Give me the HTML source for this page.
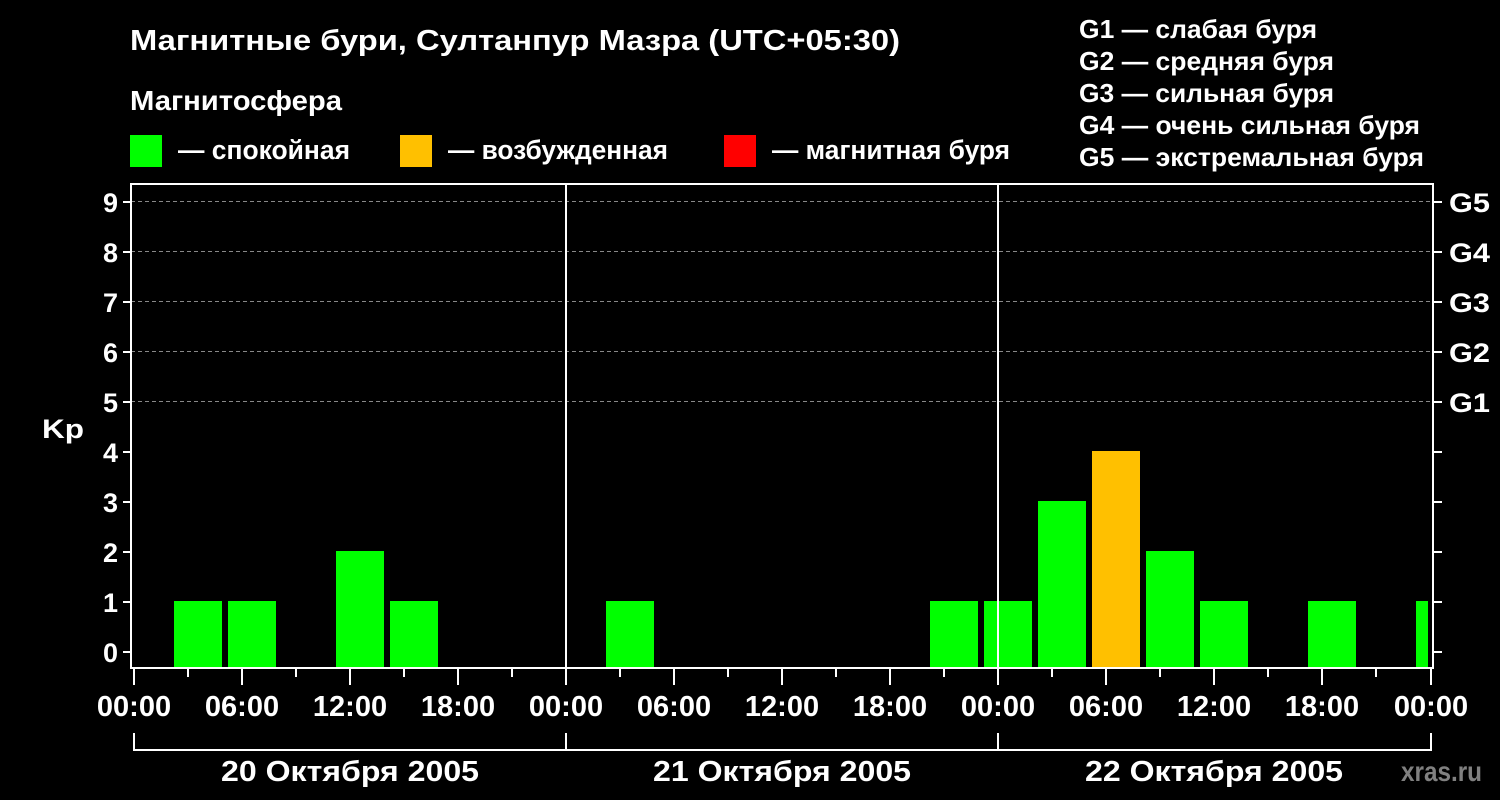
<!DOCTYPE html><html><head><meta charset="utf-8"><style>body{margin:0;background:#000}svg{display:block}text{font-family:"Liberation Sans",sans-serif;font-weight:bold;fill:#fff}</style></head><body>
<svg width="1500" height="800" viewBox="0 0 1500 800">
<rect width="1500" height="800" fill="#000"/>
<text x="130" y="50" font-size="29" textLength="770" lengthAdjust="spacingAndGlyphs">Магнитные бури, Султанпур Мазра (UTC+05:30)</text>
<text x="130" y="110" font-size="28" textLength="212" lengthAdjust="spacingAndGlyphs">Магнитосфера</text>
<rect x="130" y="135" width="32" height="32" fill="#00ff00"/><text x="178" y="159" font-size="27" textLength="172" lengthAdjust="spacingAndGlyphs">— спокойная</text>
<rect x="400" y="135" width="32" height="32" fill="#ffc000"/><text x="448" y="159" font-size="27" textLength="220" lengthAdjust="spacingAndGlyphs">— возбужденная</text>
<rect x="724" y="135" width="32" height="32" fill="#ff0000"/><text x="772" y="159" font-size="27" textLength="238" lengthAdjust="spacingAndGlyphs">— магнитная буря</text>
<g font-size="26"><text x="1079" y="38" textLength="238" lengthAdjust="spacingAndGlyphs">G1 — слабая буря</text><text x="1079" y="70" textLength="255" lengthAdjust="spacingAndGlyphs">G2 — средняя буря</text><text x="1079" y="102" textLength="255" lengthAdjust="spacingAndGlyphs">G3 — сильная буря</text><text x="1079" y="134" textLength="341" lengthAdjust="spacingAndGlyphs">G4 — очень сильная буря</text><text x="1079" y="166" textLength="345" lengthAdjust="spacingAndGlyphs">G5 — экстремальная буря</text></g>
<g stroke="#888" stroke-dasharray="4,3" stroke-width="1"><line x1="131" y1="201.5" x2="1432" y2="201.5"/><line x1="131" y1="251.5" x2="1432" y2="251.5"/><line x1="131" y1="301.5" x2="1432" y2="301.5"/><line x1="131" y1="351.5" x2="1432" y2="351.5"/><line x1="131" y1="401.5" x2="1432" y2="401.5"/></g>
<g fill="#00ff00">
<rect x="174" y="601" width="48" height="67"/><rect x="228" y="601" width="48" height="67"/><rect x="336" y="551" width="48" height="117"/><rect x="390" y="601" width="48" height="67"/>
<rect x="606" y="601" width="48" height="67"/>
<rect x="930" y="601" width="48" height="67"/><rect x="984" y="601" width="48" height="67"/><rect x="1038" y="501" width="48" height="167"/><rect x="1146" y="551" width="48" height="117"/><rect x="1200" y="601" width="48" height="67"/><rect x="1308" y="601" width="48" height="67"/><rect x="1416" y="601" width="12" height="67"/>
</g>
<rect x="1092" y="451" width="48" height="217" fill="#ffc000"/>
<g stroke="#fff" stroke-width="2" fill="none">
<rect x="131" y="184" width="1302" height="484"/>
<line x1="566" y1="184" x2="566" y2="685"/><line x1="998" y1="184" x2="998" y2="685"/>
<line x1="134" y1="668" x2="134" y2="685"/><line x1="1431" y1="668" x2="1431" y2="685"/>
<path d="M134 733V750H1431V733M566 733V750M998 733V750"/>
<path d="M188 668v9M242 668v9M296 668v9M350 668v9M404 668v9M458 668v9M512 668v9M620 668v9M674 668v9M728 668v9M782 668v9M836 668v9M890 668v9M944 668v9M1052 668v9M1106 668v9M1160 668v9M1214 668v9M1268 668v9M1322 668v9M1376 668v9"/>
<path d="M242 677v8M350 677v8M458 677v8M674 677v8M782 677v8M890 677v8M1106 677v8M1214 677v8M1322 677v8"/>
<path d="M123 652h8M123 602h8M123 552h8M123 502h8M123 452h8M123 402h8M123 352h8M123 302h8M123 252h8M123 202h8"/>
<path d="M1433 652h9M1433 602h9M1433 552h9M1433 502h9M1433 452h9M1433 402h9M1433 352h9M1433 302h9M1433 252h9M1433 202h9"/>
</g>
<g font-size="27" text-anchor="end"><text x="118" y="662">0</text><text x="118" y="612">1</text><text x="118" y="562">2</text><text x="118" y="512">3</text><text x="118" y="462">4</text><text x="118" y="412">5</text><text x="118" y="362">6</text><text x="118" y="312">7</text><text x="118" y="262">8</text><text x="118" y="212">9</text></g>
<text x="42" y="438" font-size="27" textLength="42" lengthAdjust="spacingAndGlyphs">Kp</text>
<g font-size="27"><text x="1449" y="412" textLength="41" lengthAdjust="spacingAndGlyphs">G1</text><text x="1449" y="362" textLength="41" lengthAdjust="spacingAndGlyphs">G2</text><text x="1449" y="312" textLength="41" lengthAdjust="spacingAndGlyphs">G3</text><text x="1449" y="262" textLength="41" lengthAdjust="spacingAndGlyphs">G4</text><text x="1449" y="212" textLength="41" lengthAdjust="spacingAndGlyphs">G5</text></g>
<g font-size="29" text-anchor="middle">
<text x="134" y="716">00:00</text><text x="242" y="716">06:00</text><text x="350" y="716">12:00</text><text x="458" y="716">18:00</text><text x="566" y="716">00:00</text><text x="674" y="716">06:00</text><text x="782" y="716">12:00</text><text x="890" y="716">18:00</text><text x="998" y="716">00:00</text><text x="1106" y="716">06:00</text><text x="1214" y="716">12:00</text><text x="1322" y="716">18:00</text><text x="1431" y="716">00:00</text>
</g>
<g font-size="29"><text x="221" y="781" textLength="258" lengthAdjust="spacingAndGlyphs">20 Октября 2005</text><text x="653" y="781" textLength="258" lengthAdjust="spacingAndGlyphs">21 Октября 2005</text><text x="1085" y="781" textLength="258" lengthAdjust="spacingAndGlyphs">22 Октября 2005</text></g>
<text x="1401" y="781" font-size="28" textLength="81" lengthAdjust="spacingAndGlyphs" style="fill:#808080">xras.ru</text>
</svg></body></html>
